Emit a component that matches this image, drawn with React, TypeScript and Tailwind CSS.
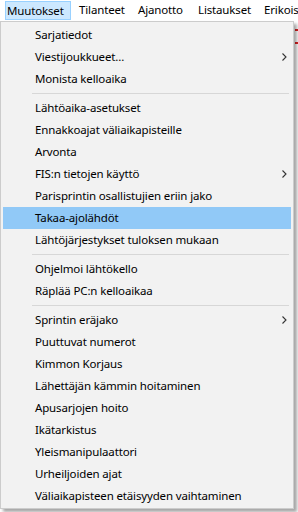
import React from "react";

type Item = { label: string; sub?: boolean; active?: boolean } | "sep";

const items: Item[] = [
  { label: "Sarjatiedot" },
  { label: "Viestijoukkueet...", sub: true },
  { label: "Monista kelloaika" },
  "sep",
  { label: "Lähtöaika-asetukset" },
  { label: "Ennakkoajat väliaikapisteille" },
  { label: "Arvonta" },
  { label: "FIS:n tietojen käyttö", sub: true },
  { label: "Parisprintin osallistujien eriin jako" },
  { label: "Takaa-ajolähdöt", active: true },
  { label: "Lähtöjärjestykset tuloksen mukaan" },
  "sep",
  { label: "Ohjelmoi lähtökello" },
  { label: "Räplää PC:n kelloaikaa" },
  "sep",
  { label: "Sprintin eräjako", sub: true },
  { label: "Puuttuvat numerot" },
  { label: "Kimmon Korjaus" },
  { label: "Lähettäjän kämmin hoitaminen" },
  { label: "Apusarjojen hoito" },
  { label: "Ikätarkistus" },
  { label: "Yleismanipulaattori" },
  { label: "Urheiljoiden ajat" },
  { label: "Väliaikapisteen etäisyyden vaihtaminen" },
];

function Chevron() {
  return (
    <svg width="5" height="8" viewBox="0 0 5 8" className="block">
      <path d="M0.5 0.5 L4 4 L0.5 7.5" fill="none" stroke="#333" strokeWidth="1.1" />
    </svg>
  );
}

export default function App() {
  return (
    <div
      className="relative w-[298px] h-[512px] bg-white overflow-hidden text-[11.5px] tracking-[-0.15px] text-black"
      style={{ fontFamily: '"Segoe UI", "Noto Sans", sans-serif' }}
    >
      {/* menu bar */}
      <div className="flex h-[21px] items-start bg-white leading-none">
        <div className="ml-[5px] mt-[1px] flex h-[19px] w-[66px] shrink-0 items-center border border-[#99d1ff] bg-[#cce8ff] pl-[1px]">
          Muutokset
        </div>
        <div className="ml-[8px] flex h-[20px] w-[59px] shrink-0 items-center">Tilanteet</div>
        <div className="flex h-[20px] w-[60px] shrink-0 items-center">Ajanotto</div>
        <div className="flex h-[20px] w-[66px] shrink-0 items-center">Listaukset</div>
        <div className="flex h-[20px] w-[34px] shrink-0 items-center overflow-hidden whitespace-nowrap">Erikois</div>
      </div>

      {/* content behind menu (right edge) */}
      <div className="absolute left-[295px] top-[29px] h-[2px] w-[3px] bg-[#d22]" />
      <div className="absolute left-[295px] top-[42px] h-[2px] w-[3px] bg-[#d22]" />

      {/* dropdown */}
      <div className="relative z-10 w-[294px] border border-[#cccccc] bg-[#f2f2f2] pb-[1px] pl-[2px] pr-[2px] pt-[2px] shadow-[3px_3px_3px_rgba(0,0,0,0.35)]">
        {items.map((it, i) =>
          it === "sep" ? (
            <div key={i} className="flex h-[7px] items-center pl-[29px] pr-[2px]">
              <div className="h-px w-full bg-[#d7d7d7]" />
            </div>
          ) : (
            <div
              key={i}
              className={
                "flex h-[22px] items-center justify-between pl-[32px] pr-[4px] whitespace-nowrap " +
                (it.active ? "bg-[#91c9f7]" : "")
              }
            >
              <span>{it.label}</span>
              {it.sub ? <Chevron /> : null}
            </div>
          )
        )}
      </div>
    </div>
  );
}
